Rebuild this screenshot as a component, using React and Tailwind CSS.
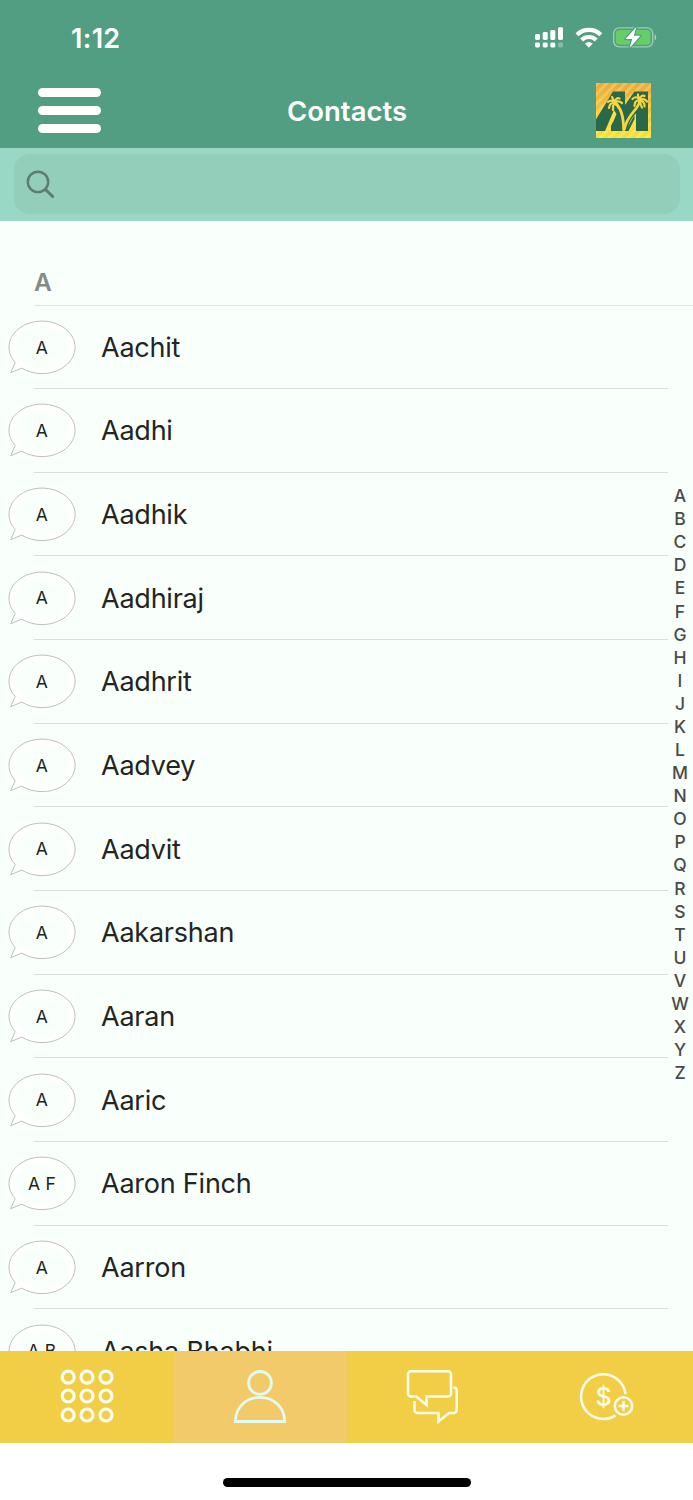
const contacts = [
  { name: "Aachit", initials: "A" },
  { name: "Aadhi", initials: "A" },
  { name: "Aadhik", initials: "A" },
  { name: "Aadhiraj", initials: "A" },
  { name: "Aadhrit", initials: "A" },
  { name: "Aadvey", initials: "A" },
  { name: "Aadvit", initials: "A" },
  { name: "Aakarshan", initials: "A" },
  { name: "Aaran", initials: "A" },
  { name: "Aaric", initials: "A" },
  { name: "Aaron Finch", initials: "A F" },
  { name: "Aarron", initials: "A" },
  { name: "Aasha Bhabhi", initials: "A B" },
];

const letters = "ABCDEFGHIJKLMNOPQRSTUVWXYZ".split("");

function StatusIcons() {
  return (
    <svg width="124" height="24" viewBox="0 0 124 24" fill="#fff">
      {/* dual sim signal */}
      <rect x="1" y="8" width="5" height="6" rx="1.4" />
      <rect x="8.7" y="6" width="5" height="8" rx="1.4" />
      <rect x="16.3" y="4" width="5" height="10" rx="1.4" />
      <rect x="24" y="1.3" width="5" height="12.7" rx="1.4" />
      <rect x="1" y="16.5" width="5" height="5" rx="1.4" />
      <rect x="8.7" y="16.5" width="5" height="5" rx="1.4" />
      <rect x="16.3" y="16.5" width="5" height="5" rx="1.4" />
      <rect x="24" y="16.5" width="5" height="5" rx="1.4" opacity=".3" />
      {/* wifi */}
      <g fill="none" stroke="#fff" strokeWidth="4.2">
        <path d="M43 8.8a17 17 0 0 1 23.8 0" />
        <path d="M47.6 13.9a10.6 10.6 0 0 1 14.6 0" />
      </g>
      <path d="M51 17.6a6 6 0 0 1 7.800 0L54.900 21.700Z" />
      {/* battery */}
      <rect x="79.7" y="1.9" width="39" height="19" rx="5.5" fill="none" stroke="#fff" strokeOpacity=".45" strokeWidth="1.4" />
      <rect x="81.9" y="4.1" width="34.6" height="14.6" rx="3.4" fill="#65ce66" />
      <path d="M120.6 8.3c2.2 1.2 2.2 5 0 6.2Z" opacity=".5" />
      <path d="M102.3 .9 91.5 13h6.7l-2.6 8.9L106.5 9.7H99.8Z" stroke="#529e82" strokeWidth="2.4" paintOrder="stroke" strokeLinejoin="round" />
    </svg>
  );
}

function Logo() {
  return (
    <svg width="55" height="55" viewBox="0 0 55 55">
      <defs>
        <linearGradient id="sun" x1="0" y1="0" x2="0" y2="1">
          <stop offset="0" stopColor="#eba743" />
          <stop offset=".55" stopColor="#f4c63c" />
          <stop offset="1" stopColor="#f8de3f" />
        </linearGradient>
        <linearGradient id="ray" x1="0" y1="0" x2="0" y2="1">
          <stop offset="0" stopColor="#f3bf52" />
          <stop offset="1" stopColor="#fdec48" />
        </linearGradient>
        <pattern id="rays" width="6.6" height="6.6" patternUnits="userSpaceOnUse" patternTransform="rotate(44)">
          <rect width="3" height="6.6" fill="#fff" />
        </pattern>
        <mask id="rayMask">
          <rect width="55" height="55" fill="url(#rays)" />
        </mask>
      </defs>
      <rect width="55" height="55" fill="url(#sun)" />
      <rect width="55" height="55" fill="url(#ray)" mask="url(#rayMask)" />
      <path d="M0 36.5 17 8.5H29V22L38.5 8.5H52V48H0Z" fill="#2b6847" />
      {/* gaps between the legs */}
      <path d="M9 48 18 27 20.5 31 15.500 43V48Z" fill="#f9df44" />
      <path d="M15 48V43L17 39V48Z" fill="#2b6847" />
      <path d="M31 48C32.500 41 35 35 40 30.500V48Z" fill="#f9df44" />
      <path d="M29.500 48 38.500 32V36L32.500 48Z" fill="#2b6847" />
      <g fill="none" stroke="#f8d643" strokeLinecap="round">
        <path d="M19 20.5c5 3 8.500 11 8.700 26.500" strokeWidth="2.8" />
        <path d="M43.5 18c0 8-12.500 13-15 28" strokeWidth="2.600" />
        <path d="M18.5 19.500c-2-2.500-4.500-2.500-6.500-.5M18.500 19.500c-3.500 0-5 2-5.500 5.500M18.500 19.500c-1.500 2.500-2 5-1.500 7.500M18.500 19.500c-1.500-3-1.500-4.500-2.500-5.500M18.500 19.500c.5-3 2.500-5 5-4M18.500 19.500c2.500-1.500 5.500-1 7.500.5M18.500 19.500c3 1 4 3 4 5.500" strokeWidth="2.200" />
        <path d="M44 17c-2.500-3.500-5-3.500-7.500-1M44 17c-4 0-5.500 2.500-5.500 6M44 17c-1.500-3.500-2.500-4.500-2-5.500M44 17c0-4 2.500-5 4.500-4M44 17c3-1.500 5.500-.5 7 1.500M44 17c3.500 1.500 5 3.500 4.500 6.500M44 17c0 3 .5 5 2 7.500" strokeWidth="2.200" />
      </g>
    </svg>
  );
}

function Bubble({ initials }) {
  return (
    <div className="relative flex h-[55px] w-[68px] items-center justify-center">
      <svg className="absolute inset-0" width="68" height="55" viewBox="0 0 68 55">
        <defs>
          <radialGradient id="bubble">
            <stop offset=".7" stopColor="#f9fffb" />
            <stop offset=".9" stopColor="#fff" />
          </radialGradient>
        </defs>
        <path
          d="M7.2 42.5C3.2 38 1 33 1 27.3C1 12.9 15.7 1.1 34 1.1S67.1 12.9 67.1 27.3S52.3 53.6 34 53.6C26.5 53.6 19.6 51.7 13.7 48.1L2.7 52.7Z"
          fill="url(#bubble)"
          stroke="#bdc0bf"
          strokeWidth="1"
        />
      </svg>
      <span className="relative text-[17.5px] leading-none tracking-[0.2px] text-[#202322]">{initials}</span>
    </div>
  );
}

function ContactRow({ contact }) {
  return (
    <li className="relative flex h-[83.65px] shrink-0 items-center gap-[25px] pl-2">
      <Bubble initials={contact.initials} />
      <span className="text-[27px] leading-none tracking-[-0.23px] text-[#222524]">{contact.name}</span>
      <div className="absolute bottom-0 left-[34px] right-[25px] h-px bg-[#d9dfdc]"></div>
    </li>
  );
}

function GridIcon() {
  const steps = [9.2, 28, 47];
  return (
    <svg width="56" height="56" viewBox="0 0 56 56" fill="none" stroke="#fffef2" strokeWidth="3.2">
      {steps.map((y) => steps.map((x) => <circle key={`${x}-${y}`} cx={x} cy={y} r="6" />))}
    </svg>
  );
}

function PersonIcon() {
  return (
    <svg width="56" height="56" viewBox="0 0 56 56" fill="none" stroke="#e0fbef" strokeWidth="2.8">
      <circle cx="28" cy="14.9" r="11.4" />
      <path d="M3.4 53.5C3.4 39.500 14 29.300 28 29.300s24.700 10.200 24.700 24.200Z" />
    </svg>
  );
}

function ChatIcon() {
  return (
    <svg width="56" height="56" viewBox="0 0 56 56" fill="none" stroke="#fffbea" strokeWidth="2.6">
      <path d="M8 3.300H45a3 3 0 0 1 3 3V25.500a3 3 0 0 1-3 3H23.500V37L13.200 28.500H8a3 3 0 0 1-3-3V6.300a3 3 0 0 1 3-3Z" />
      <path d="M50.500 19.500c2 0 3.200 1 3.200 3V42a3 3 0 0 1-3 3H46L35.500 53.500V45H14.500a3 3 0 0 1-3-3V33" />
    </svg>
  );
}

function MoneyIcon() {
  return (
    <svg className="overflow-visible" width="56" height="56" viewBox="0 0 56 56" fill="none" stroke="#fffbea" strokeWidth="2.6">
      <path d="M39.5 46.3A22.3 22.3 0 1 1 49.5 25" />
      <circle cx="47.5" cy="37" r="8.7" />
      <path d="M42.5 37h10M47.5 32v10" />
      <text x="27.5" y="37" textAnchor="middle" fill="#fffbea" stroke="none" className="font-[Inter,sans-serif] text-[25px] font-medium">$</text>
    </svg>
  );
}

export default function App() {
  return (
    <div className="flex h-[1500px] w-[693px] flex-col overflow-hidden bg-white font-[Inter,sans-serif]">
      <header className="h-[148px] shrink-0 bg-[#529e82] text-white">
        <div className="flex h-[76px] items-center justify-between pl-[71px] pr-[35px]">
          <span className="pt-px text-[27px] font-semibold leading-none tracking-[0.3px]">1:12</span>
          <StatusIcons />
        </div>
        <div className="grid grid-cols-[63px_1fr_55px] items-center pl-[38px] pr-[42px] pt-[7px]">
          <button className="flex flex-col gap-[9px]">
            <span className="h-[9px] rounded-full bg-white"></span>
            <span className="h-[9px] rounded-full bg-white"></span>
            <span className="h-[9px] rounded-full bg-white"></span>
          </button>
          <h1 className="pr-[3px] pt-[2px] text-center text-[27.5px] font-semibold leading-none">Contacts</h1>
          <Logo />
        </div>
      </header>

      <div className="h-[73px] shrink-0 bg-[#99d8c4] px-[13.5px] pt-[6px]">
        <div className="flex h-[60px] items-center rounded-[16px] bg-[#93cebb] pl-3">
          <svg width="30" height="30" viewBox="0 0 30 30" fill="none" stroke="#5c7c71">
            <circle cx="12" cy="12.9" r="10.2" strokeWidth="2.4" />
            <path d="m19.5 20.5 7.2 7" strokeWidth="3" strokeLinecap="round" />
          </svg>
        </div>
      </div>

      <main className="relative min-h-0 flex-1 overflow-hidden bg-[#f9fffb]">
        <div className="flex h-[84px] items-end pb-[10px] pl-[34px]">
          <h2 className="text-[24.5px] font-semibold leading-[26px] text-[#858a88]">A</h2>
        </div>
        <div className="ml-[34px] h-px bg-[#dfe5e2]"></div>
        <ul className="-mt-[0.5px] flex flex-col">
          {contacts.map((contact) => (
            <ContactRow key={contact.name} contact={contact} />
          ))}
        </ul>
        <nav className="absolute right-0 top-[263.4px] flex w-[26px] flex-col items-center text-[17.5px] font-medium text-[#484b4a]">
          {letters.map((letter) => (
            <a key={letter} className="flex h-[23.08px] items-center leading-none">{letter}</a>
          ))}
        </nav>
      </main>

      <footer className="shrink-0">
        <div className="grid h-[92px] grid-cols-4 bg-[#f2ce47]">
          <button className="flex items-center justify-center pb-[2px]"><GridIcon /></button>
          <button className="flex items-center justify-center bg-[#f2ca69] pb-[2px]"><PersonIcon /></button>
          <button className="flex items-center justify-center pb-[2px] pr-[4px]"><ChatIcon /></button>
          <button className="flex items-center justify-center pb-px pr-[5px]"><MoneyIcon /></button>
        </div>
        <div className="flex h-[57px] justify-center bg-white pt-[35px]">
          <div className="h-[8.5px] w-[248px] rounded-full bg-black"></div>
        </div>
      </footer>
    </div>
  );
}
